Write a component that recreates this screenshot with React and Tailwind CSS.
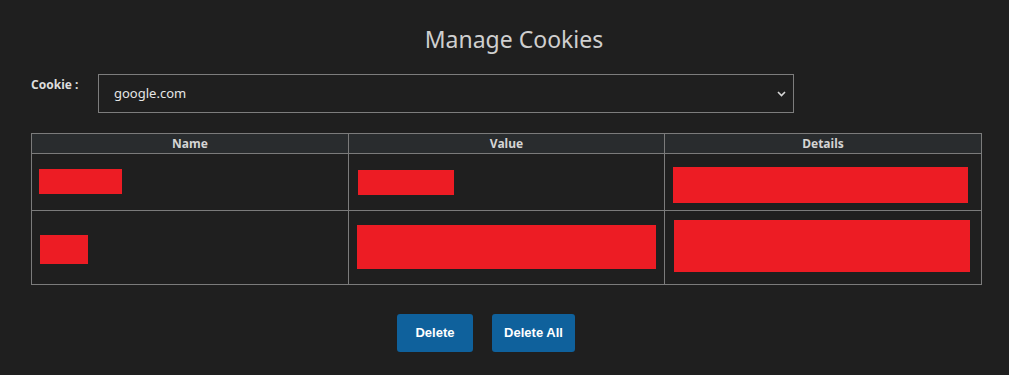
import React from 'react';

const RED = 'bg-[#ed1c24]';

function Redacted({ className }) {
    return <div className={`${RED} ${className}`} />;
}

export default function App() {
    return (
        <div className="w-[1009px] h-[375px] bg-[#1f1f1f] overflow-hidden" style={{ fontFamily: '"Noto Sans", "Open Sans", sans-serif' }}>
            {/* title */}
            <div className="pt-[22px] pl-[19px] flex justify-center">
                <h1 className="text-[23px] leading-[34px] text-[#cfcfcf] font-normal">Manage Cookies</h1>
            </div>

            {/* cookie picker */}
            <div className="flex items-start mt-[18px] pl-[31px]">
                <label className="w-[67px] pt-[2px] text-[12px] font-bold text-[#dddddd]">Cookie :</label>
                <div className="relative w-[696px] h-[39px] border border-[#7d7d7d] flex items-center pl-[15px]">
                    <span className="text-[13px] text-[#e6e6e6]">google.com</span>
                    <svg className="absolute right-[7px] top-[16px]" width="9" height="6" viewBox="0 0 9 6" fill="none">
                        <path d="M1 1l3.5 3.5L8 1" stroke="#d6d6d6" strokeWidth="1.6" />
                    </svg>
                </div>
            </div>

            {/* table */}
            <div className="ml-[31px] mt-[20px] w-[951px] border border-[#7b7b7b] text-[12px]">
                <div className="grid grid-cols-[316px_316px_317px] h-[19px] bg-[#292c2e] font-bold text-[#d4d4d4] leading-[19px] text-center">
                    <div>Name</div>
                    <div className="border-l border-[#7b7b7b]">Value</div>
                    <div className="border-l border-[#7b7b7b]">Details</div>
                </div>
                <div className="grid grid-cols-[316px_316px_317px] h-[57px] border-t border-[#7b7b7b]">
                    <div className="pt-[15px] pl-[7px]">
                        <Redacted className="w-[83px] h-[25px]" />
                    </div>
                    <div className="border-l border-[#7b7b7b] pt-[16px] pl-[9px]">
                        <Redacted className="w-[96px] h-[25px]" />
                    </div>
                    <div className="border-l border-[#7b7b7b] pt-[13px] pl-[8px]">
                        <Redacted className="w-[295px] h-[36px]" />
                    </div>
                </div>
                <div className="grid grid-cols-[316px_316px_317px] h-[74px] border-t border-[#7b7b7b]">
                    <div className="pt-[24px] pl-[8px]">
                        <Redacted className="w-[48px] h-[29px]" />
                    </div>
                    <div className="border-l border-[#7b7b7b] pt-[14px] pl-[8px]">
                        <Redacted className="w-[299px] h-[44px]" />
                    </div>
                    <div className="border-l border-[#7b7b7b] pt-[9px] pl-[9px]">
                        <Redacted className="w-[296px] h-[52px]" />
                    </div>
                </div>
            </div>

            {/* actions */}
            <div className="flex justify-center gap-[19px] mt-[29px] pr-[37px]" style={{ fontFamily: '"Liberation Sans", Arial, sans-serif' }}>
                <button className="w-[76px] h-[38px] rounded-[3px] bg-[#0f619c] text-white text-[13px] font-bold">Delete</button>
                <button className="w-[83px] h-[38px] rounded-[3px] bg-[#0f619c] text-white text-[13px] font-bold">Delete All</button>
            </div>
        </div>
    );
}
